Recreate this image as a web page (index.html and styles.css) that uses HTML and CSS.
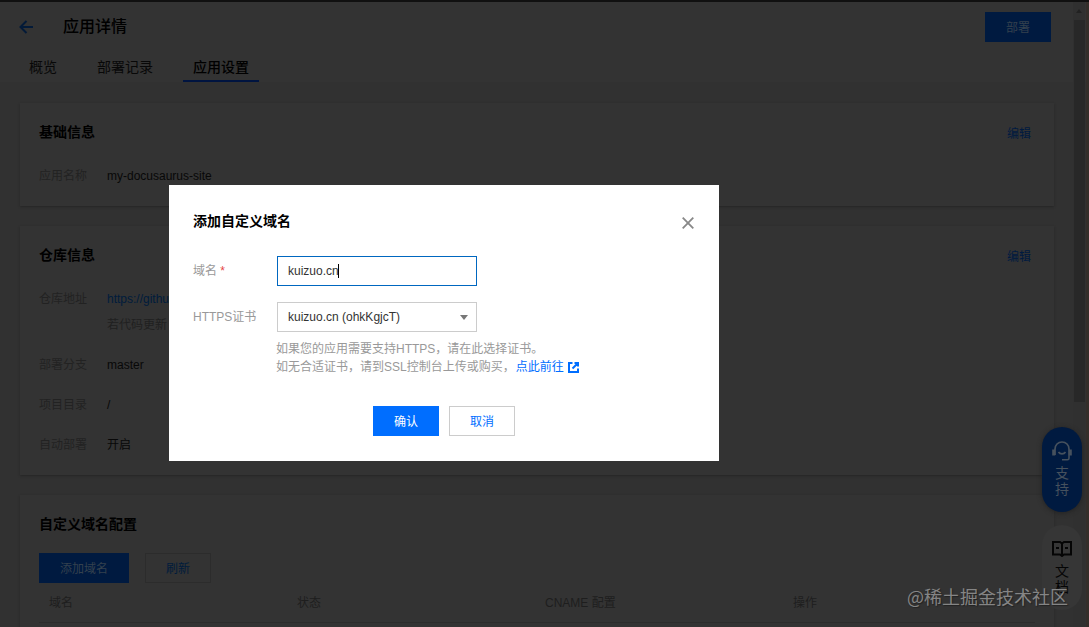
FILE: index.html
```
<!DOCTYPE html>
<html lang="zh-CN">
<head>
    <meta charset="utf-8">
    <title>应用详情</title>
    <link rel="stylesheet" href="styles.css">
</head>
<body>
    <div class="page">
        <header class="header">
            <div class="title-row">
                <svg class="back" width="14" height="14" viewBox="0 0 14 14"><path d="M14 7H2M7.5 1L1.5 7l6 6" fill="none" stroke="currentColor" stroke-width="2"/></svg>
                <h1>应用详情</h1>
                <button class="btn btn-deploy">部署</button>
            </div>
            <nav class="tabs">
                <a class="tab">概览</a>
                <a class="tab">部署记录</a>
                <a class="tab active">应用设置</a>
            </nav>
        </header>

        <main class="content">
            <section class="card card-basic">
                <div class="card-head"><h2>基础信息</h2><a class="edit">编辑</a></div>
                <div class="row"><span class="label">应用名称</span><span>my-docusaurus-site</span></div>
            </section>

            <section class="card card-repo">
                <div class="card-head"><h2>仓库信息</h2><a class="edit">编辑</a></div>
                <div class="row"><span class="label">仓库地址</span><a class="repo-link">https://github.com</a></div>
                <div class="row row-note"><span class="label"></span><span class="note">若代码更新</span></div>
                <div class="row"><span class="label">部署分支</span><span>master</span></div>
                <div class="row"><span class="label">项目目录</span><span>/</span></div>
                <div class="row"><span class="label">自动部署</span><span>开启</span></div>
            </section>

            <section class="card card-domain">
                <div class="card-head"><h2>自定义域名配置</h2></div>
                <div class="actions">
                    <button class="btn btn-add">添加域名</button>
                    <button class="btn btn-refresh">刷新</button>
                </div>
                <div class="table-head">
                    <span>域名</span><span>状态</span><span>CNAME 配置</span><span>操作</span>
                </div>
            </section>
        </main>
    </div>

    <div class="scrollbar"><i class="arrow-up"></i><i class="thumb"></i></div>
    <div class="edge"></div>

    <aside class="floaters">
        <div class="support">
            <svg width="20" height="20" viewBox="0 0 20 20" fill="none" stroke="currentColor">
                <path d="M3 14V8c0-4 3-7 7-7s7 3 7 7v6" stroke-width="1.7"/>
                <path d="M1.7 8.5v6M18.3 8.5v6" stroke-width="3"/>
                <path d="M6.500 11c1.500 2.500 5.500 2.500 7 0M17 14v3.200c0 1-.6 1.600-1.600 1.600H10" stroke-width="1.6"/>
            </svg>
            <span>支</span><span>持</span>
        </div>
        <div class="docs">
            <svg width="20" height="16" viewBox="0 0 20 16" fill="none" stroke="currentColor">
                <path d="M1 1h7l2 1.500L12 1h7v12.500h-7L10 15l-2-1.500H1zM10 2.500V15" stroke-width="2"/>
                <path d="M4 7h3M13 7h3" stroke-width="2"/>
            </svg>
            <span>文</span><span>档</span>
        </div>
    </aside>

    <div class="dialog">
        <div class="dialog-head">
            <h3>添加自定义域名</h3>
            <svg class="close" width="12" height="12" viewBox="0 0 12 12"><path d="M.7.7l10.600 10.600M11.300.7L.7 11.300" stroke="currentColor" stroke-width="1.800"/></svg>
        </div>
        <div class="field">
            <span class="field-label">域名 <em>*</em></span>
            <div class="input focused">kuizuo.cn<i class="caret"></i></div>
        </div>
        <div class="field">
            <span class="field-label">HTTPS证书</span>
            <div class="input select">kuizuo.cn (ohkKgjcT)<i class="arrow-down"></i></div>
        </div>
        <div class="help">
            <p>如果您的应用需要支持HTTPS，请在此选择证书。</p>
            <p>如无合适证书，请到SSL控制台上传或购买，<a>点此前往
                <svg width="11" height="11" viewBox="0 0 11 11" fill="none" stroke="currentColor"><path d="M4.500 1H1v9h9V6.500M6.500 1H10v3.500M9.500 1.500L4.500 6.500" stroke-width="2"/></svg></a></p>
        </div>
        <div class="dialog-foot">
            <button class="btn btn-ok">确认</button>
            <button class="btn btn-cancel">取消</button>
        </div>
    </div>

    <div class="watermark">@稀土掘金技术社区</div>
</body>
</html>
```
FILE: styles.css
```
* {
    box-sizing: border-box;
}
body {
    margin: 0;
    width: 1089px;
    height: 627px;
    overflow: hidden;
    position: relative;
    background: #313131;
    color: #080808;
    font: 12px/18px "Liberation Sans", "Noto Sans CJK SC", sans-serif;
}
h1, h2, h3, p {
    margin: 0;
}
.page {
    height: 627px;
    overflow: hidden;
    border-top: 2px solid #101010;
}
.header {
    height: 80px;
    background: #333;
}
.title-row {
    display: flex;
    align-items: center;
    height: 50px;
    padding: 0 38px 0 19px;
}
.back {
    color: #031a38;
}
h1 {
    margin-left: 30px;
    font-size: 16px;
    line-height: 24px;
    font-weight: 500;
    color: #000;
}
.btn {
    display: flex;
    align-items: center;
    justify-content: center;
    width: 66px;
    height: 30px;
    padding: 2px 0 0;
    border: 1px solid transparent;
    font: inherit;
}
.btn-deploy {
    margin-left: auto;
    background: #001a40;
    color: #34414e;
}
.tabs {
    display: flex;
    height: 30px;
    padding-left: 19px;
    gap: 20px;
}
.tab {
    height: 30px;
    padding: 0 10px;
    font-size: 14px;
    line-height: 30px;
}
.tab.active {
    font-weight: 500;
    color: #000;
    border-bottom: 2px solid #001440;
}
.content {
    display: flex;
    flex-direction: column;
    gap: 20px;
    padding: 21px 35px 0 20px;
}
.card {
    background: #333;
    padding: 19px 19px 0;
    box-shadow: 0 1px 2px #262626;
}
.card-basic {
    height: 103px;
}
.card-repo {
    height: 249px;
}
.card-domain {
    height: 150px;
}
.card-head {
    display: flex;
    justify-content: space-between;
    align-items: center;
    height: 20px;
    padding-right: 4px;
    margin-bottom: 24px;
}
h2, h3 {
    font-size: 14px;
    line-height: 20px;
    font-weight: 700;
    color: #000;
}
.edit {
    padding-top: 3px;
    color: #001a40;
}
.row {
    display: flex;
    height: 20px;
    margin-bottom: 20px;
    line-height: 20px;
}
.label {
    width: 68px;
    color: #222;
}
.card-repo .row:nth-child(2) {
    margin-bottom: 6px;
}
.repo-link {
    color: #001c3c;
}
.note {
    color: #202020;
}
.actions {
    display: flex;
    gap: 16px;
    margin-top: -5px;
}
.btn-add {
    width: 90px;
    background: #001a40;
    color: #34414e;
}
.btn-refresh {
    border-color: #2c2c2c;
    background: #333;
    color: #001c3c;
}
.table-head {
    display: grid;
    grid-template-columns: repeat(4, 248px);
    height: 40px;
    padding-left: 10px;
    line-height: 40px;
    color: #1e1e1e;
    border-bottom: 1px solid #2c2c2c;
    overflow: hidden;
}
.scrollbar {
    position: absolute;
    top: 2px;
    right: 4px;
    width: 12px;
    height: 625px;
    background: #303030;
    display: flex;
    flex-direction: column;
    align-items: center;
}
.arrow-up {
    margin: 7px 0;
    border: 3px solid transparent;
    border-top: 0;
    border-bottom: 4px solid #222;
}
.thumb {
    width: 11px;
    height: 382px;
    background: #282828;
}
.edge {
    position: absolute;
    top: 2px;
    right: 0;
    width: 3px;
    height: 625px;
    background: #342e2a;
}
.floaters {
    position: absolute;
    top: 427px;
    left: 1042px;
    width: 40px;
    display: flex;
    flex-direction: column;
    gap: 13px;
    font-size: 14px;
    line-height: 16px;
}
.support, .docs {
    display: flex;
    flex-direction: column;
    align-items: center;
    height: 85px;
    border-radius: 20px;
}
.support {
    padding-top: 14px;
    background: #001a40;
    color: #46515d;
    box-shadow: 0 1px 5px #222;
}
.support svg {
    margin-bottom: 4px;
}
.docs {
    padding-top: 16px;
    background: #363636;
    color: #050505;
}
.docs svg {
    margin-bottom: 6px;
}
.dialog {
    position: absolute;
    top: 185px;
    left: 169px;
    width: 550px;
    height: 276px;
    padding: 26px 25px 0 24px;
    background: #fff;
    color: #333;
}
.dialog-head {
    display: flex;
    justify-content: space-between;
    align-items: center;
    height: 20px;
    margin-bottom: 25px;
}
.close {
    position: relative;
    top: 2px;
    color: #888;
}
.field {
    display: flex;
    align-items: center;
    margin-bottom: 16px;
}
.field-label {
    width: 84px;
    color: #999;
}
.field-label em {
    color: #e54545;
    font-style: normal;
}
.input {
    display: flex;
    align-items: center;
    width: 200px;
    height: 30px;
    padding: 0 8px 0 10px;
    border: 1px solid #ccc;
}
.focused {
    border-color: #0067c0;
}
.caret {
    width: 1px;
    height: 14px;
    margin-left: -1px;
    background: #000;
}
.select {
    justify-content: space-between;
}
.arrow-down {
    border: 4px solid transparent;
    border-top: 5px solid #777;
    border-bottom: 0;
}
.help {
    margin: -8px 0 30px 83px;
    color: #999;
    white-space: nowrap;
}
.help a {
    margin-left: 1px;
    color: #006eff;
}
.help svg {
    margin-left: 1px;
    vertical-align: -2px;
}
.dialog-foot {
    display: flex;
    gap: 10px;
    margin-left: 180px;
}
.btn-ok {
    background: #006eff;
    color: #fff;
}
.btn-cancel {
    border-color: #ccc;
    background: #fff;
    color: #006eff;
}
.watermark {
    position: absolute;
    top: 583px;
    right: 21px;
    color: #858585;
    font: 18px/26px "Noto Sans CJK SC", sans-serif;
    text-shadow: 1px 1px 1px #222;
}
```
